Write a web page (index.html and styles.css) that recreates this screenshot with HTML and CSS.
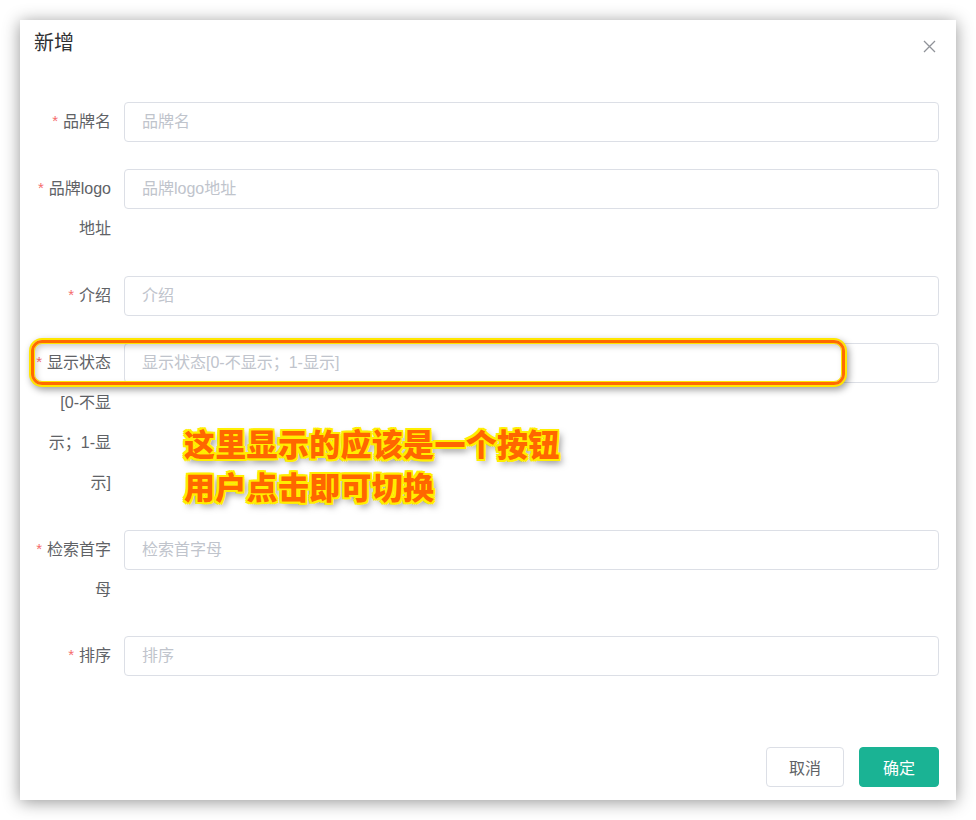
FILE: index.html
```html
<!DOCTYPE html>
<html lang="zh-CN">
<head>
<meta charset="utf-8">
<title>新增</title>
<link rel="stylesheet" href="styles.css">
</head>
<body>
<div class="dialog">
  <div class="dialog-header">
    <span class="dialog-title">新增</span>
    <button class="dialog-close" aria-label="关闭">
      <svg width="13" height="13" viewBox="0 0 13 13"><path d="M1 1 L12 12 M12 1 L1 12" stroke="#909399" stroke-width="1.3" fill="none"/></svg>
    </button>
  </div>
  <div class="dialog-body">
    <div class="form-item">
      <label class="form-label"><span class="req">*</span>品牌名</label>
      <div class="form-content"><input class="input" placeholder="品牌名"></div>
    </div>
    <div class="form-item">
      <label class="form-label"><span class="req">*</span>品牌logo<br>地址</label>
      <div class="form-content"><input class="input" placeholder="品牌logo地址"></div>
    </div>
    <div class="form-item">
      <label class="form-label"><span class="req">*</span>介绍</label>
      <div class="form-content"><input class="input" placeholder="介绍"></div>
    </div>
    <div class="form-item">
      <label class="form-label"><span class="req">*</span>显示状态<br>[0-不显<br>示；1-显<br>示]</label>
      <div class="form-content"><input class="input" placeholder="显示状态[0-不显示；1-显示]"></div>
    </div>
    <div class="form-item">
      <label class="form-label"><span class="req">*</span>检索首字<br>母</label>
      <div class="form-content"><input class="input" placeholder="检索首字母"></div>
    </div>
    <div class="form-item">
      <label class="form-label"><span class="req">*</span>排序</label>
      <div class="form-content"><input class="input" placeholder="排序"></div>
    </div>
  </div>
  <div class="dialog-footer">
    <button class="btn">取消</button>
    <button class="btn btn-primary">确定</button>
  </div>
</div>
<div class="annot-box"></div>
<div class="annot-text">这里显示的应该是一个按钮<br>用户点击即可切换</div>
</body>
</html>
```
FILE: styles.css
```css
html, body {
  margin: 0;
  padding: 0;
  background: #ffffff;
}
body {
  padding: 20px;
  font-family: "Liberation Sans", "Noto Sans CJK SC", sans-serif;
  position: relative;
  width: 976px;
  height: 820px;
  box-sizing: border-box;
  overflow: hidden;
}
.dialog {
  width: 936px;
  height: 780px;
  background: #fff;
  box-shadow: 0 2px 16px rgba(0,0,0,0.42);
  display: flex;
  flex-direction: column;
  box-sizing: border-box;
}
.dialog-header {
  display: flex;
  align-items: center;
  justify-content: space-between;
  padding: 11px 20px 0 14px;
  height: 24px;
  box-sizing: content-box;
}
.dialog-title {
  font-size: 20px;
  line-height: 24px;
  color: #303133;
}
.dialog-close {
  border: 0;
  background: none;
  padding: 0;
  width: 13px;
  height: 13px;
  display: flex;
  margin-top: 6px;
}
.dialog-body {
  padding: 47px 17px 0 0;
  display: flex;
  flex-direction: column;
}
.form-item {
  display: flex;
  margin-bottom: 26px;
}
.form-label {
  flex: 0 0 104px;
  box-sizing: border-box;
  padding-right: 13px;
  text-align: right;
  font-size: 16px;
  line-height: 40.25px;
  color: #606266;
  white-space: nowrap;
}
.req {
  color: #f56c6c;
  margin-right: 5px;
  font-size: 15px;
  line-height: 1;
  vertical-align: 1px;
}
.form-content {
  flex: 1;
  min-height: 41px;
}
.input {
  width: 100%;
  height: 40px;
  box-sizing: border-box;
  border: 1px solid #dcdfe6;
  border-radius: 4px;
  padding: 0 17px;
  font-size: 16px;
  font-family: "Liberation Sans", "Noto Sans CJK SC", sans-serif;
  color: #606266;
  outline: none;
  display: block;
}
.input::placeholder {
  color: #c0c4cc;
}
.dialog-footer {
  margin-top: auto;
  display: flex;
  justify-content: flex-end;
  gap: 15px;
  padding: 0 17px 13px 0;
}
.btn {
  height: 40px;
  width: 78px;
  padding: 0;
  border: 1px solid #dcdfe6;
  border-radius: 4px;
  background: #fff;
  color: #606266;
  font-size: 16px;
  font-family: "Liberation Sans", "Noto Sans CJK SC", sans-serif;
}
.btn-primary {
  background: #1ab394;
  border-color: #1ab394;
  color: #fff;
  width: 80px;
}
.annot-box {
  position: absolute;
  left: 31px;
  top: 340px;
  width: 814px;
  height: 45px;
  box-sizing: border-box;
  border: 3px solid #ff6a00;
  border-radius: 11px;
  box-shadow: 0 0 0 2px #ffe600, inset 0 0 0 1px #ffe600, 2px 3px 7px 2px rgba(0,0,0,0.38), inset 2px 3px 6px rgba(0,0,0,0.22);
}
.annot-text {
  position: absolute;
  left: 184px;
  top: 421px;
  font-family: "Noto Sans CJK SC", sans-serif;
  font-weight: 900;
  font-size: 31px;
  line-height: 43px;
  color: #ff6600;
  letter-spacing: 0.3px;
  text-shadow:
    2px 0 0 #ffee00, -2px 0 0 #ffee00, 0 2px 0 #ffee00, 0 -2px 0 #ffee00,
    2px 2px 0 #ffee00, -2px -2px 0 #ffee00, 2px -2px 0 #ffee00, -2px 2px 0 #ffee00,
    3px 4px 7px rgba(0,0,0,0.5);
}
```
